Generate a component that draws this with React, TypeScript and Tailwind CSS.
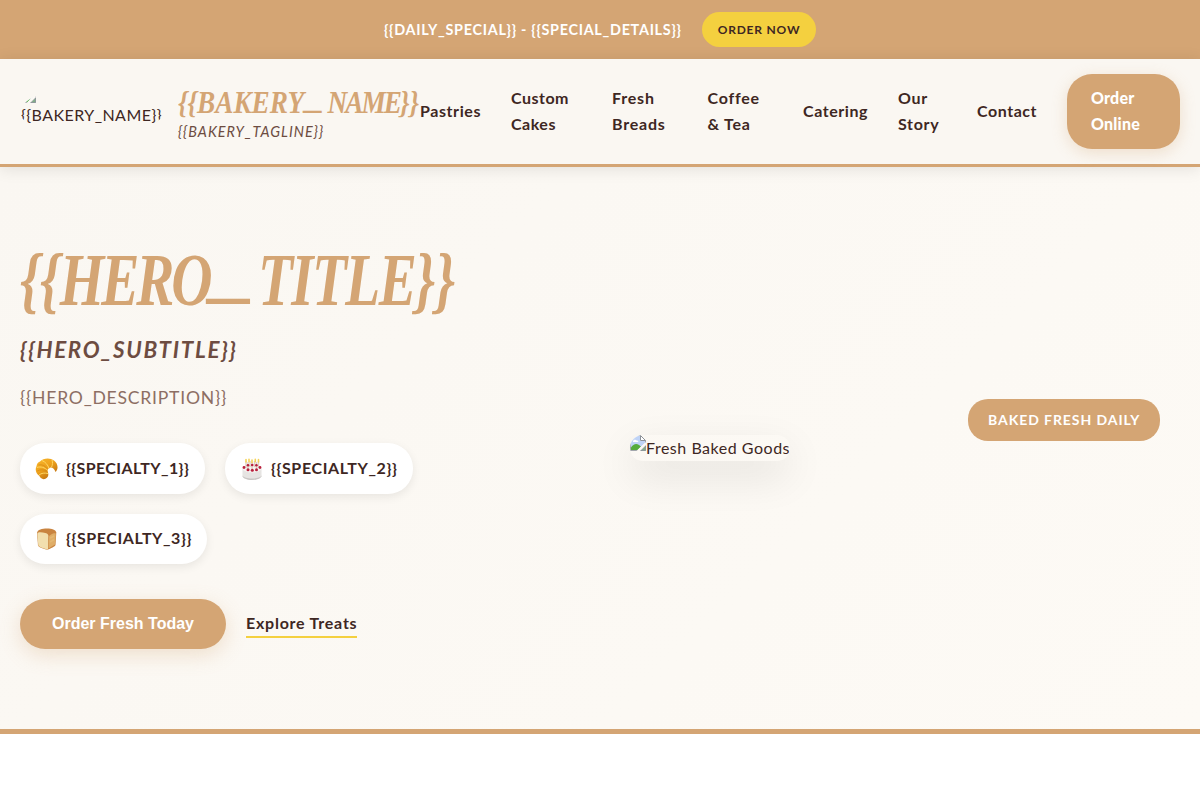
import type { ReactNode } from "react";

const navItems: { lines: string[]; width: string; spacing: string }[] = [
  { lines: ["Pastries"], width: "w-[61px]", spacing: "tracking-[0.58px]" },
  { lines: ["Custom", "Cakes"], width: "w-[71px]", spacing: "tracking-[0.5px]" },
  { lines: ["Fresh", "Breads"], width: "w-[65.5px]", spacing: "tracking-[0.8px]" },
  { lines: ["Coffee", "& Tea"], width: "w-[65.5px]", spacing: "tracking-[0.75px]" },
  { lines: ["Catering"], width: "w-[65px]", spacing: "tracking-[0.56px]" },
  { lines: ["Our", "Story"], width: "w-[49px]", spacing: "tracking-[0.7px]" },
  { lines: ["Contact"], width: "w-[60px]", spacing: "tracking-[0.54px]" },
];

function BrokenImageIcon({ className = "" }: { className?: string }) {
  return (
    <svg viewBox="0 0 16 16" className={`h-4 w-4 shrink-0 ${className}`}>
      <path d="M.5.5h10l5 5v10H.5z" fill="#fff" stroke="#a3a7ad" />
      <path d="M1 1h9v5h5v2L7.500 15H1z" fill="#bfd3f6" />
      <path d="M3 6.500c0-2 3-2.500 3.600-1 1.400-.3 2 .6 1.600 1.500H3z" fill="#fff" />
      <path d="M1 15v-2.500C3 9.500 6 8 9 10l2 1.500L7.500 15z" fill="#56ac3c" />
      <path d="M6.500 16 16 7v3l-6 6z" fill="#fbf8f3" />
      <path d="M10.500.5v5h5z" fill="#fff" stroke="#8d9299" />
      <path d="M11 15.500h4.500V11z" fill="#7fae86" stroke="#8d9299" strokeWidth=".7" />
    </svg>
  );
}

function Croissant() {
  return (
    <svg viewBox="0 0 24 24" className="h-6 w-6">
      <defs>
        <linearGradient id="crust" x1="0" y1="0" x2=".7" y2="1">
          <stop offset="0" stopColor="#f9b92e" />
          <stop offset=".5" stopColor="#eda11c" />
          <stop offset="1" stopColor="#b96b10" />
        </linearGradient>
      </defs>
      <path
        d="M5 4.500C8 1 15 .2 19 3.500c4 3 4.800 8.500 1.500 11.500-.8-2.800-2.500-4.500-5-4.600-2.500.6-3.300 2.200-2.600 4.600.6 2.200.8 4-1 5.800-1.500 1.700-4.200 2-6 .3-.8-.7-1-1.500-1.700-2.300C1 16.500-.2 12.500 1.500 9.200 1.700 7.200 3 5 5 4.500z"
        fill="url(#crust)"
      />
      <path
        d="M7 3.500c3.500 1.500 6 4.500 7 8M1.800 10.500c4-1.300 8 0 11 3M17 2.800c.8 2.500.6 5-.5 7.500M4 18c2.500-2 5.500-2.300 9-1.500"
        fill="none"
        stroke="#ffd762"
        strokeWidth="1"
      />
      <path
        d="M3.500 8c3.500-.8 6.500.6 8.500 3.500M2.200 14c3-1.700 6.600-1.600 9.800.2"
        fill="none"
        stroke="#d48816"
        strokeWidth=".7"
      />
    </svg>
  );
}

function Cake() {
  return (
    <svg viewBox="0 0 24 24" className="h-6 w-6">
      <path d="M2.500 11v8c0 2 4.500 4 9.500 4s9.500-2 9.500-4v-8z" fill="#e6e4e2" />
      <path d="M2.500 18.500c1 2 5 3 9.500 3s8.500-1 9.500-3v.5c0 2-4.500 4-9.500 4s-9.500-2-9.500-4z" fill="#c9c6c4" />
      <ellipse cx="12" cy="11.500" rx="9.500" ry="4" fill="#f5f3f1" />
      <path d="M6 4v7M10 4v6M14.500 4v6M18.500 4v7M8 5v8M12 5v8M16.500 5v8" stroke="#ded0c4" strokeWidth="1.400" />
      <path d="M6 2.500v2.500M12 3v2.500M18.500 2.500v2.500M9 2.300v2.500M15.300 2.300v2.500" stroke="#f4d35a" strokeWidth="1.600" strokeLinecap="round" />
      <g fill="#b9203c">
        <circle cx="4" cy="10.500" r="1.400" />
        <circle cx="8" cy="8.300" r="1.300" />
        <circle cx="12.200" cy="8" r="1.300" />
        <circle cx="16.400" cy="8.300" r="1.300" />
        <circle cx="20" cy="10.500" r="1.400" />
        <circle cx="8" cy="12.800" r="1.500" />
        <circle cx="12.300" cy="13.300" r="1.500" />
        <circle cx="16.500" cy="12.800" r="1.500" />
      </g>
    </svg>
  );
}

function Bread() {
  return (
    <svg viewBox="0 0 24 24" className="h-6 w-6">
      <path d="M2 6C2.500 2.500 7 1.500 12 1.500S20.500 2.500 21.300 5.500L20.500 18c-.2 1.500-5 3.500-8 4.700C8.500 22 4 20.500 3 18.500z" fill="#c98440" />
      <path d="M2.300 6.500c1-2 5-1.200 8-.5 2.500.6 3.500 2 3 4.500l-.3 12C9 21.500 4 20 3.300 18.200z" fill="#f2dfae" />
      <path d="M14 9.500c1.500-2.500 5-4 6.800-3L20 17.500l-6.500 4z" fill="#dfad67" />
      <path d="M15.200 11l4-2M15 15l4-2.500" stroke="#e4b873" strokeWidth="1.500" />
    </svg>
  );
}

function Chip({ icon, size, spacing, children }: { icon: ReactNode; size: string; spacing: string; children: ReactNode }) {
  return (
    <div
      className={`flex items-center gap-[7px] rounded-[25px] bg-white pl-[15px] shadow-[0_3px_10px_rgba(0,0,0,0.08)] ${size}`}
    >
      {icon}
      <span className={`pb-0.5 font-bold whitespace-nowrap ${spacing}`}>{children}</span>
    </div>
  );
}

export default function App() {
  return (
    <div className="min-h-[800px] w-full overflow-hidden bg-white font-[Lato,sans-serif] text-base text-[#3e2723]">
      <div className="flex h-[59px] items-center justify-center gap-5 bg-[#d4a574]">
        <span className="w-[298px] text-[14.4px] font-bold tracking-[0.71px] whitespace-nowrap text-white">
          {"{{DAILY_SPECIAL}} - {{SPECIAL_DETAILS}}"}
        </span>
        <button className="h-[35px] w-[114px] rounded-[20px] bg-[#f4d03f] text-[12px] font-bold tracking-[0.8px] text-[#3e2723]">
          ORDER NOW
        </button>
      </div>

      <header className="relative z-10 flex h-[108px] items-center border-b-[3px] border-[#d4a574] bg-[#faf7f2] px-5 shadow-[0_2px_15px_rgba(0,0,0,0.1)]">
        <div className="flex w-[400px] shrink-0 items-center gap-[15px]">
          <div className="h-[50px] w-[143px] shrink-0 overflow-hidden rounded-[50%] whitespace-nowrap">
            <BrokenImageIcon />
            <span className="-mt-px block pl-px text-[16px] leading-[26px] tracking-[0.45px]">{"{{BAKERY_NAME}}"}</span>
          </div>
          <div className="w-[242px] pt-[7px]">
            <div className="h-[31px] w-fit origin-left scale-x-[0.88] font-['Liberation_Serif',serif] text-[31px] leading-[29px] font-bold whitespace-nowrap text-[#d4a574] italic">
              <span>{"{{"}</span>
              <span>BAKERY</span>
              <span className="relative -top-1 mr-[9px] ml-0.5 inline-block origin-left scale-x-[1.35]">_</span>
              <span className="tracking-[-2.2px]">NAME</span>
              <span>{"}}"}</span>
            </div>
            <div className="h-[23px] text-[14.4px] leading-[25px] tracking-[1.03px] whitespace-nowrap text-[#6d4c41] italic">
              {"{{BAKERY_TAGLINE}}"}
            </div>
          </div>
        </div>
        <nav className="flex shrink-0 items-center gap-[30px]">
          {navItems.map((item) => (
            <a
              key={item.lines[0]}
              className={`shrink-0 pb-0.5 leading-[26px] font-bold whitespace-nowrap ${item.width} ${item.spacing}`}
            >
              {item.lines.map((line) => (
                <span key={line} className="block">
                  {line}
                </span>
              ))}
            </a>
          ))}
          <a className="flex h-[75px] w-[113px] flex-col justify-center rounded-[25px] bg-[#d4a574] pb-0.5 pl-6 leading-[26px] font-black tracking-[0.2px] text-white shadow-[0_4px_15px_rgba(212,165,116,0.3)]">
            <span>Order</span>
            <span>Online</span>
          </a>
        </nav>
      </header>

      <section className="grid h-[567px] grid-cols-2 items-center gap-[60px] border-b-[5px] border-[#d4a574] bg-[linear-gradient(135deg,#faf7f2_0%,#fdfaf5_100%)] px-5">
        <div>
          <h1 className="h-[77px] w-fit origin-left scale-x-[0.772] font-['Liberation_Serif',serif] text-[74px] leading-[66px] font-bold whitespace-nowrap text-[#d4a574] italic">
            <span>{"{{"}</span>
            <span className="tracking-[-4px]">HERO</span>
            <span className="relative -top-[11px] mr-[22px] ml-1 inline-block origin-left scale-x-[1.5]">_</span>
            <span className="tracking-[-2px]">TITLE</span>
            <span>{"}}"}</span>
          </h1>
          <p className="mt-[7px] h-[38px] text-[22.4px] leading-[38px] font-bold tracking-[1.7px] text-[#6d4c41] italic">
            {"{{HERO_SUBTITLE}}"}
          </p>
          <p className="mt-[13px] h-[32px] text-[17.6px] leading-[32px] tracking-[0.75px] text-[#8d6e63]">
            {"{{HERO_DESCRIPTION}}"}
          </p>
          <div className="mt-[29px] flex flex-wrap gap-5">
            <Chip icon={<Croissant />} size="h-[51px] w-[185px]" spacing="tracking-[0.4px]">
              {"{{SPECIALTY_1}}"}
            </Chip>
            <Chip icon={<Cake />} size="h-[51px] w-[188px]" spacing="tracking-[0.62px]">
              {"{{SPECIALTY_2}}"}
            </Chip>
            <Chip icon={<Bread />} size="h-[50px] w-[187px]" spacing="tracking-[0.58px]">
              {"{{SPECIALTY_3}}"}
            </Chip>
          </div>
          <div className="mt-[35px] flex items-center gap-5">
            <button className="h-[50px] w-[206px] rounded-[30px] bg-[#d4a574] font-['Liberation_Sans',sans-serif] text-base font-bold text-white shadow-[0_6px_20px_rgba(212,165,116,0.3)]">
              Order Fresh Today
            </button>
            <a className="h-[28px] w-[111px] border-b-2 border-[#f4d03f] leading-[26px] font-bold tracking-[0.76px] whitespace-nowrap">
              Explore Treats
            </a>
          </div>
        </div>
        <div className="relative">
          <div className="flex h-[26px] w-[160px] items-start overflow-hidden rounded-[20px] whitespace-nowrap shadow-[0_15px_40px_rgba(0,0,0,0.1)]">
            <BrokenImageIcon />
            <span className="leading-[26px] tracking-[0.52px]">Fresh Baked Goods</span>
          </div>
          <div className="absolute -top-9 right-5 flex h-[42px] w-[192px] items-center rounded-[20px] bg-[#d4a574] pb-0.5 pl-5 text-[14px] font-bold tracking-[0.93px] whitespace-nowrap text-white">
            BAKED FRESH DAILY
          </div>
        </div>
      </section>
    </div>
  );
}
